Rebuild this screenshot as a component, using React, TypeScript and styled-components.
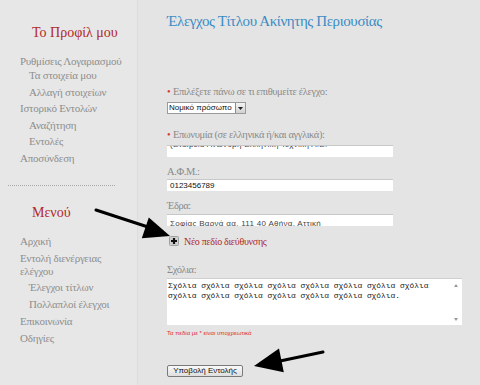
import React from "react";
import styled, { createGlobalStyle } from "styled-components";

const Global = createGlobalStyle`
  html, body { margin: 0; padding: 0; }
  body {
    width: 480px;
    height: 385px;
    overflow: hidden;
    background: #e4e4e4;
    font-family: "Liberation Serif", "Times New Roman", serif;
  }
`;

const Page = styled.div`
  position: relative;
  display: flex;
  width: 480px;
  height: 385px;
`;

const Sidebar = styled.nav`
  width: 138px;
  flex: none;
  background: #e7e7e7;
  border-right: 1px solid #dcdcdc;
  padding-top: 25px;
  box-sizing: border-box;
`;

const SideHeading = styled.h3<{ $gap: number }>`
  margin: 0 0 ${(p) => p.$gap}px 32px;
  font-weight: normal;
  font-size: 14px;
  line-height: 16px;
  height: 16px;
  color: #b02a2a;
`;

const SideList = styled.ul`
  list-style: none;
  margin: 0;
  padding: 0 0 0 20px;
  width: 112px;
`;

const SideItem = styled.li<{ $sub?: boolean; $gap?: number }>`
  font-size: 11px;
  letter-spacing: -0.25px;
  line-height: 13px;
  color: #8e8e8e;
  padding-left: ${(p) => (p.$sub ? 9 : 0)}px;
  margin-top: ${(p) => p.$gap ?? 4}px;
  &:first-child { margin-top: 0; }
`;

const Divider = styled.hr`
  margin: 20px 0 19px 8px;
  width: 107px;
  border: none;
  border-top: 1px dotted #a8a8a8;
  height: 0;
`;

const Main = styled.main`
  flex: 1;
  padding: 12px 0 0 29px;
  box-sizing: border-box;
`;

const Title = styled.h1`
  margin: 0 0 56px 0;
  font-weight: normal;
  font-size: 15px;
  letter-spacing: -0.4px;
  line-height: 18px;
  height: 18px;
  color: #3b8cc4;
`;

const Field = styled.div<{ $gap?: number }>`
  display: flex;
  flex-direction: column;
  align-items: flex-start;
  margin-bottom: ${(p) => p.$gap ?? 9}px;
`;

const Label = styled.div<{ $gap?: number }>`
  font-size: 10.5px;
  letter-spacing: -0.4px;
  line-height: 12px;
  height: 12px;
  color: #8a8a8a;
  margin-bottom: ${(p) => p.$gap ?? 2}px;
  white-space: nowrap;
`;

const Star = styled.span`
  color: #e03030;
  letter-spacing: 0;
`;

const SelectWrap = styled.div`
  display: flex;
  align-items: stretch;
  height: 10px;
  background: #fff;
  border: 1px solid #9a9a9a;
`;

const SelectText = styled.span`
  font-family: "Liberation Sans", Arial, sans-serif;
  font-size: 8px;
  line-height: 10px;
  color: #111;
  padding: 0 3px 0 1px;
`;

const SelectBtn = styled.span`
  width: 9px;
  background: linear-gradient(#f4f4f4, #d2d2d2);
  border-left: 1px solid #8a8a8a;
  display: flex;
  align-items: center;
  justify-content: center;
`;

const TextInput = styled.div`
  width: 220px;
  height: 11px;
  background: #fff;
  border-top: 1px solid #c8c8c8;
  box-sizing: content-box;
  font-family: "Liberation Sans", Arial, sans-serif;
  font-size: 8px;
  line-height: 11px;
  color: #111;
  padding: 0 3px;
  overflow: hidden;
  white-space: nowrap;
`;

const Blurred = styled.span<{ $shift: number }>`
  display: inline-block;
  transform: translateY(${(p) => p.$shift}px);
  color: #444;
  letter-spacing: 0.3px;
`;

const AddRow = styled.div`
  display: flex;
  align-items: center;
  gap: 5px;
  height: 12px;
  margin: 9px 0 17px 2px;
`;

const AddText = styled.span`
  font-size: 10px;
  letter-spacing: -0.3px;
  line-height: 12px;
  color: #b02a2a;
  padding-top: 2px;
`;

const TextArea = styled.div`
  position: relative;
  width: 295px;
  height: 47px;
  background: #fff;
  border-top: 1px solid #cfcfcf;
  box-sizing: border-box;
  padding: 2px 16px 0 1px;
  font-family: "Liberation Mono", "Courier New", monospace;
  font-size: 7.9px;
  line-height: 10px;
  color: #222;
`;

const ScrollArrow = styled.span<{ $top?: boolean }>`
  position: absolute;
  right: 4px;
  ${(p) => (p.$top ? "top: 5px;" : "bottom: 4px;")}
  width: 0;
  height: 0;
  border-left: 2px solid transparent;
  border-right: 2px solid transparent;
  ${(p) => (p.$top ? "border-bottom: 3px solid #999;" : "border-top: 3px solid #999;")}
`;

const Required = styled.div`
  margin-top: 4px;
  height: 8px;
  font-family: "Liberation Sans", Arial, sans-serif;
  font-size: 6px;
  line-height: 8px;
  color: #e02a2a;
`;

const SubmitButton = styled.button`
  margin-top: 28px;
  display: block;
  width: 76px;
  height: 12px;
  padding: 0;
  border: 1px solid #7a7a7a;
  border-radius: 2px;
  background: linear-gradient(#fafafa, #dedede);
  font-family: "Liberation Sans", Arial, sans-serif;
  font-size: 8px;
  line-height: 10px;
  color: #111;
`;

const Overlay = styled.svg`
  position: absolute;
  left: 0;
  top: 0;
  pointer-events: none;
`;

const PlusIcon = () => (
  <svg width="10" height="10" viewBox="0 0 10 10">
    <rect x="0.5" y="0.5" width="9" height="9" rx="1" fill="#cfcfcf" stroke="#a0a0a0" />
    <path d="M5 2v6M2 5h6" stroke="#111" strokeWidth="2.2" />
  </svg>
);

export default function App() {
  return (
    <Page>
      <Global />
      <Sidebar>
        <SideHeading $gap={14}>Το Προφίλ μου</SideHeading>
        <SideList>
          <SideItem>Ρυθμίσεις Λογαριασμού</SideItem>
          <SideItem $sub $gap={1}>Τα στοιχεία μου</SideItem>
          <SideItem $sub $gap={3.5}>Αλλαγή στοιχείων</SideItem>
          <SideItem $gap={3.5}>Ιστορικό Εντολών</SideItem>
          <SideItem $sub $gap={3.5}>Αναζήτηση</SideItem>
          <SideItem $sub $gap={3.5}>Εντολές</SideItem>
          <SideItem $gap={3.5}>Αποσύνδεση</SideItem>
        </SideList>
        <Divider />
        <SideHeading $gap={14.5}>Μενού</SideHeading>
        <SideList>
          <SideItem>Αρχική</SideItem>
          <SideItem>Εντολή διενέργειας ελέγχου</SideItem>
          <SideItem $sub $gap={3}>Έλεγχοι τίτλων</SideItem>
          <SideItem $sub>Πολλαπλοί έλεγχοι</SideItem>
          <SideItem>Επικοινωνία</SideItem>
          <SideItem>Οδηγίες</SideItem>
        </SideList>
      </Sidebar>
      <Main>
        <Title>Έλεγχος Τίτλου Ακίνητης Περιουσίας</Title>
        <Field $gap={15}>
          <Label $gap={4}>
            <Star>•</Star> Επιλέξετε πάνω σε τι επιθυμείτε έλεγχο:
          </Label>
          <SelectWrap>
            <SelectText>Νομικό πρόσωπο</SelectText>
            <SelectBtn>
              <svg width="5" height="3" viewBox="0 0 5 3">
                <path d="M0 0h5L2.5 3z" fill="#222" />
              </svg>
            </SelectBtn>
          </SelectWrap>
        </Field>
        <Field>
          <Label $gap={4}>
            <Star>•</Star> Επωνυμία (σε ελληνικά ή/και αγγλικά):
          </Label>
          <TextInput>
            <Blurred $shift={-7}>(Εταιρεία Ανώνυμη Ελληνική Τεχνική Α.Ε.</Blurred>
          </TextInput>
        </Field>
        <Field>
          <Label $gap={1}>Α.Φ.Μ.:</Label>
          <TextInput>0123456789</TextInput>
        </Field>
        <Field $gap={0}>
          <Label $gap={2}>Έδρα:</Label>
          <TextInput>
            <Blurred $shift={3}>Σοφίας Βαρνά αα, 111 40 Αθήνα, Αττική</Blurred>
          </TextInput>
        </Field>
        <AddRow>
          <PlusIcon />
          <AddText>Νέο πεδίο διεύθυνσης</AddText>
        </AddRow>
        <Label $gap={2}>Σχόλια:</Label>
        <TextArea>
          Σχόλια σχόλια σχόλια σχόλια σχόλια σχόλια σχόλια σχόλια σχόλια σχόλια σχόλια σχόλια σχόλια σχόλια σχόλια.
          <ScrollArrow $top />
          <ScrollArrow />
        </TextArea>
        <Required>Τα πεδία με * είναι υποχρεωτικά</Required>
        <SubmitButton>Υποβολή Εντολής</SubmitButton>
      </Main>
      <Overlay width="480" height="385" viewBox="0 0 480 385">
        <line x1="96" y1="210" x2="148" y2="227" stroke="#000" strokeWidth="3" strokeLinecap="round" />
        <polygon points="170,236 141.8,238.2 148.8,217.4" fill="#000" />
        <line x1="323" y1="352" x2="280" y2="361" stroke="#000" strokeWidth="3" strokeLinecap="round" />
        <polygon points="254,366 283.8,372.2 279,348.6" fill="#000" />
      </Overlay>
    </Page>
  );
}
